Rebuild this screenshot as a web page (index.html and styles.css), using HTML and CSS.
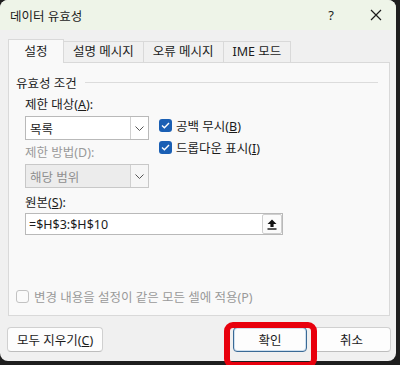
FILE: index.html
```html
<!DOCTYPE html>
<html lang="ko">
<head>
  <meta charset="UTF-8" />
  <title>데이터 유효성</title>
  <link rel="stylesheet" href="styles.css">
</head>
<body>
  <div class="dialog">
    <div class="titlebar">
      <span class="title">데이터 유효성</span>
      <span class="help">?</span>
      <span class="close">
        <svg width="12" height="12" viewBox="0 0 12 12"><path d="M1 1 L11 11 M11 1 L1 11" stroke="#1b1b1b" stroke-width="1.2" fill="none"/></svg>
      </span>
    </div>

    <div class="tabs">
      <div class="tab active">설정</div>
      <div class="tab">설명 메시지</div>
      <div class="tab">오류 메시지</div>
      <div class="tab">IME 모드</div>
    </div>

    <div class="panel">
      <div class="group-head">
        <span>유효성 조건</span>
        <span class="rule"></span>
      </div>

      <div class="group">
        <div class="label">제한 대상(<u>A</u>):</div>
        <div class="row">
          <div class="select">
            <span class="value">목록</span>
            <span class="drop">
              <svg width="9" height="5" viewBox="0 0 9 5"><path d="M0.5 0.5 L4.5 4.5 L8.5 0.5" stroke="#555" stroke-width="1" fill="none"/></svg>
            </span>
          </div>
          <div class="checks">
            <div class="check-row">
              <span class="box checked">
                <svg width="9" height="7" viewBox="0 0 9 7"><path d="M1 3.5 L3.4 5.8 L8 1" stroke="#fff" stroke-width="1.4" fill="none"/></svg>
              </span>
              <span>공백 무시(<u>B</u>)</span>
            </div>
            <div class="check-row">
              <span class="box checked">
                <svg width="9" height="7" viewBox="0 0 9 7"><path d="M1 3.5 L3.4 5.8 L8 1" stroke="#fff" stroke-width="1.4" fill="none"/></svg>
              </span>
              <span>드롭다운 표시(<u>I</u>)</span>
            </div>
          </div>
        </div>

        <div class="label disabled second">제한 방법(D):</div>
        <div class="select off">
          <span class="value">해당 범위</span>
          <span class="drop">
            <svg width="9" height="5" viewBox="0 0 9 5"><path d="M0.5 0.5 L4.5 4.5 L8.5 0.5" stroke="#555" stroke-width="1" fill="none"/></svg>
          </span>
        </div>

        <div class="label third">원본(<u>S</u>):</div>
        <div class="source">
          <span class="value">=$H$3:$H$10</span>
          <span class="pick">
            <svg width="10" height="11" viewBox="0 0 10 11"><path d="M5 0.5 L9.5 5 H6.6 V8 H3.4 V5 H0.5 Z" fill="#111"/><rect x="0.5" y="9.3" width="9" height="1.4" fill="#111"/></svg>
          </span>
        </div>
      </div>

      <div class="apply-all">
        <span class="box empty"></span>
        <span>변경 내용을 설정이 같은 모든 셀에 적용(P)</span>
      </div>
    </div>

    <div class="footer">
      <button class="btn">모두 지우기(<u>C</u>)</button>
      <div class="spacer"></div>
      <button class="btn primary">확인</button>
      <button class="btn cancel">취소</button>
    </div>
  </div>
  <div class="highlight"></div>
</body>
</html>
```

FILE: styles.css
```css
body {
  margin: 0;
  padding: 0;
  background-color: #1e1e1e;
  font-family: "Noto Sans", "Noto Sans CJK KR", sans-serif;
  font-size: 12px;
  color: #1b1b1b;
  position: relative;
  width: 400px;
  height: 365px;
  overflow: hidden;
}

.dialog {
  width: 396px;
  height: 361px;
  background: #f0f0f0;
  border-radius: 8px;
  overflow: hidden;
  display: flex;
  flex-direction: column;
}

.titlebar {
  height: 30px;
  background: #eef4e8; /* pale green title */
  display: flex;
  align-items: center;
  padding-left: 10px;
}

.title {
  flex: 1;
  font-size: 12.5px;
}

.help {
  width: 20px;
  text-align: center;
  font-size: 13px;
  margin-right: 25px;
}

.close {
  width: 20px;
  display: flex;
  justify-content: center;
  margin-right: 10px;
}

.tabs {
  display: flex;
  align-items: flex-end;
  padding-left: 8px;
  margin-top: 9px;
}

.tab {
  height: 20px;
  line-height: 20px;
  padding: 0 9px;
  border: 1px solid #d9d9d9;
  border-bottom: none;
  border-left: none;
  background: #f0f0f0;
  font-size: 12.5px;
}

.tab.active {
  height: 23px;
  line-height: 23px;
  width: 54px;
  padding: 0;
  text-align: center;
  background: #f9f9f9;
  border-left: 1px solid #d9d9d9;
  margin-bottom: -1px;
  position: relative;
}

.panel {
  margin: 0 6px 0 8px;
  height: 254px;
  background: #f9f9f9;
  border: 1px solid #d9d9d9;
  padding: 11px 7px 0 7px;
  box-sizing: border-box;
  display: flex;
  flex-direction: column;
}

.group-head {
  display: flex;
  align-items: center;
  height: 16px;
  font-size: 12.5px;
}

.rule {
  flex: 1;
  height: 1px;
  background: #dcdcdc;
  margin-left: 8px;
  margin-right: 4px;
}

.group {
  padding-left: 9px;
  margin-top: 7px;
}

.label {
  height: 16px;
  line-height: 16px;
  font-size: 12.5px;
}

.disabled {
  color: #9a9a9a;
}

.second {
  margin-top: 5px;
}

.third {
  margin-top: 7px;
}

.row {
  display: flex;
  align-items: flex-start;
  height: 24px; /* checkboxes hang below the combo */
  margin-top: 3px;
}

.select {
  width: 124px;
  height: 24px;
  box-sizing: border-box;
  border: 1px solid #b9b9b9;
  background: #fff;
  display: flex;
  align-items: center;
}

.select .value {
  flex: 1;
  padding-left: 4px;
  font-size: 12.5px;
}

.drop {
  width: 17px;
  height: 100%;
  border-left: 1px solid #d0d0d0;
  display: flex;
  align-items: center;
  justify-content: center;
}

.select.off {
  margin-top: 3px;
  background: #ececec;
  border-color: #c8c8c8;
  color: #8f8f8f;
}

.select.off .drop {
  background: #f6f6f6;
}

.checks {
  margin-left: 10px;
  margin-top: 3px;
  display: flex;
  flex-direction: column;
  gap: 9px;
}

.check-row {
  display: flex;
  align-items: center;
  gap: 4px;
  height: 13px;
  font-size: 12.5px;
}

.box {
  width: 13px;
  height: 13px;
  box-sizing: border-box;
  border-radius: 3px;
  display: flex;
  align-items: center;
  justify-content: center;
}

.box.checked {
  background: #1a5fb4;
}

.box.empty {
  border: 1px solid #c2c2c2;
  background: #fafafa;
}

.source {
  margin-top: 2px;
  width: 258px;
  height: 22px;
  box-sizing: border-box;
  border: 1px solid #b9b9b9;
  background: #fff;
  display: flex;
  align-items: center;
}

.source .value {
  flex: 1;
  padding-left: 3px;
  font-size: 12.5px;
}

.pick {
  width: 20px;
  height: 20px;
  box-sizing: border-box;
  border: 1px solid #cfcfcf;
  border-radius: 2px;
  background: #fbfbfb;
  display: flex;
  align-items: center;
  justify-content: center;
}

.apply-all {
  margin-top: auto;
  margin-bottom: 9px;
  display: flex;
  align-items: center;
  gap: 5px;
  color: #9a9a9a;
  font-size: 12.5px;
}

.footer {
  display: flex;
  align-items: center;
  padding: 0 5px 0 7px;
  margin-top: 11px;
}

.spacer {
  flex: 1;
}

.btn {
  height: 25px;
  padding: 0 9px;
  border: 1px solid #d0d0d0;
  border-bottom-color: #bdbdbd;
  border-radius: 4px;
  background: #fdfdfd;
  font-family: inherit;
  font-size: 12.5px;
  color: #1b1b1b;
}

.btn.primary {
  width: 74px;
  border: 1px solid #3a6a96;
  box-shadow: inset 0 0 0 1px #cfe0ef;
}

.btn.cancel {
  width: 79px;
  margin-left: 5px;
}

.highlight {
  position: absolute;
  left: 224px;
  top: 322px;
  width: 93px;
  height: 46px;
  box-sizing: border-box;
  border: 6px solid #e8000d;
  border-radius: 9px;
}
```
